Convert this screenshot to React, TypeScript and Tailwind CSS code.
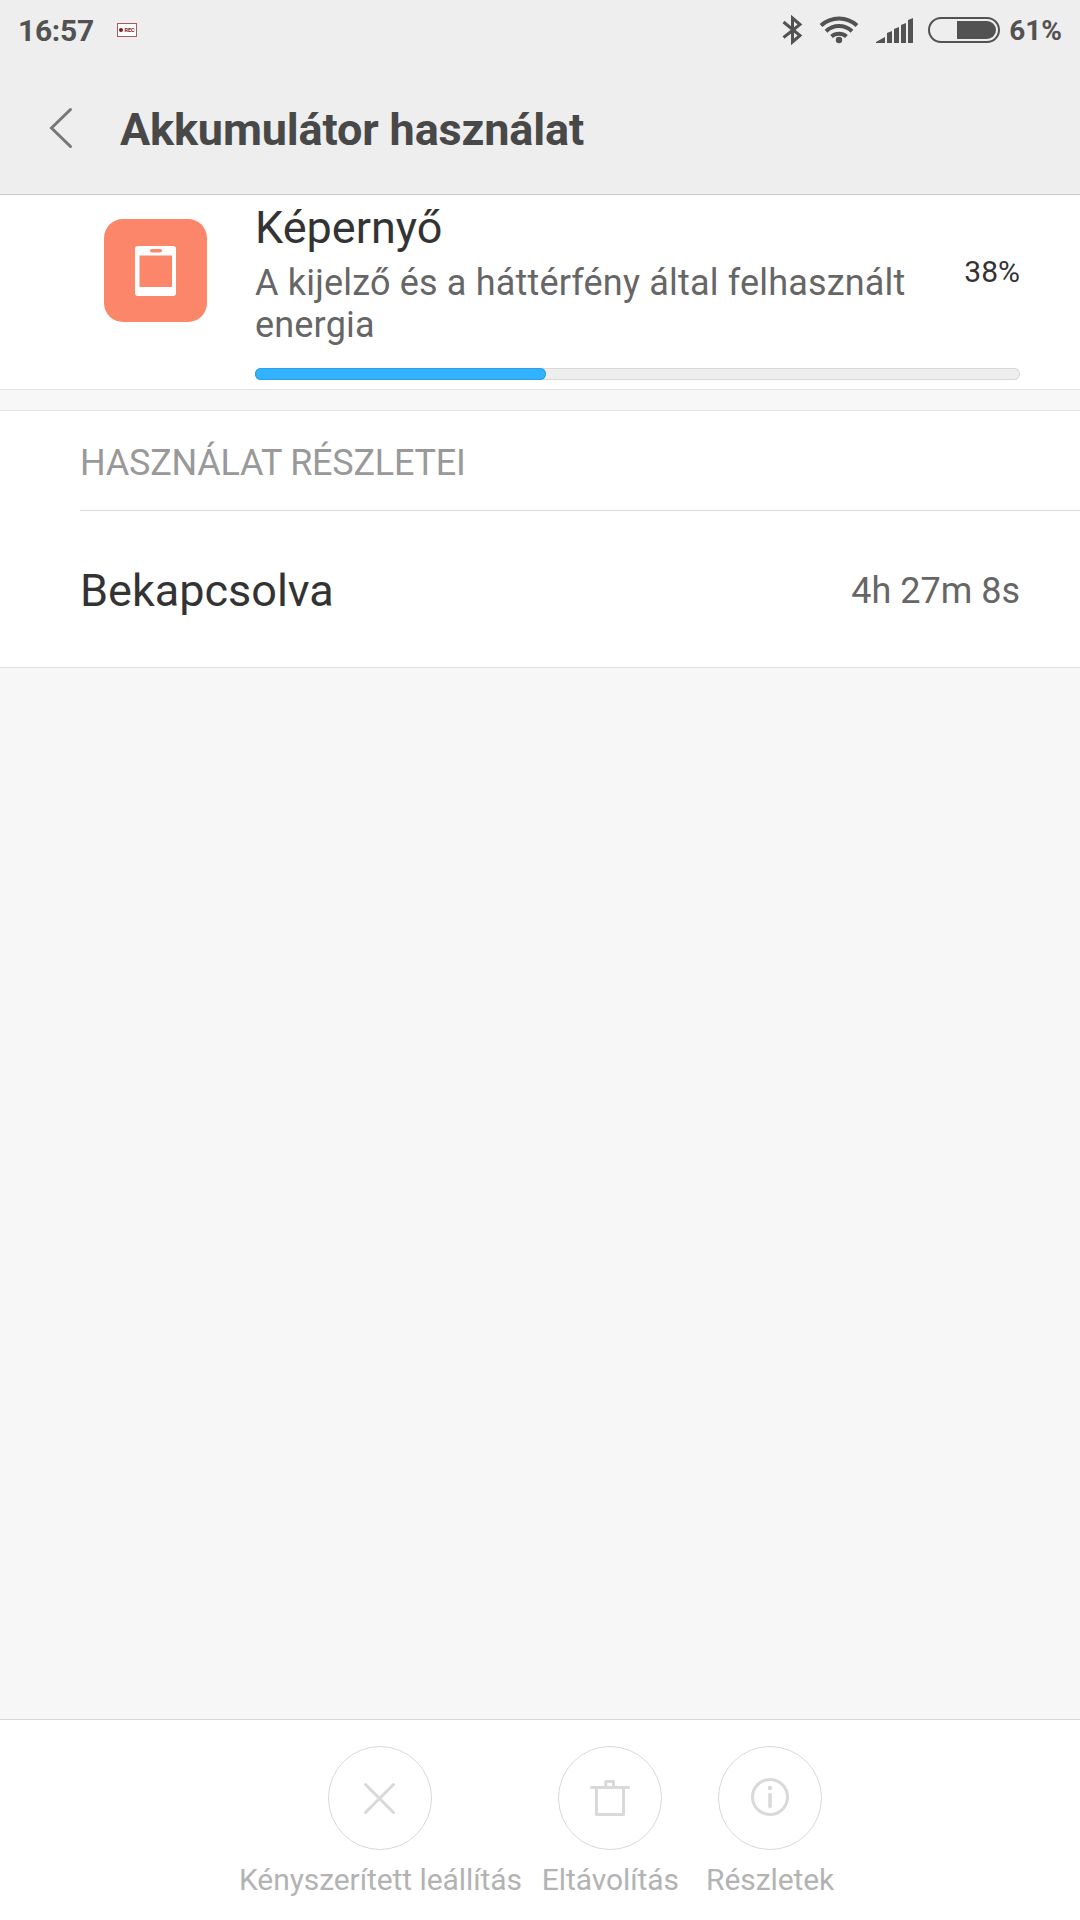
import type { ReactNode } from "react";

const usage = 38;

function StatusBar() {
	return (
		<div className="flex h-[60px] items-center justify-between pl-[18px] pr-[18px] text-[#525252]">
			<div className="flex items-center">
				<span className="w-[99px] text-[30px] leading-[60px] font-bold tracking-[-0.3px] pt-px">16:57</span>
				<svg className="h-[14px] w-5" viewBox="0 0 20 14" fill="none">
					<rect x="0.5" y="0.5" width="19" height="13" fill="#fff" stroke="#a85a5e" />
					<circle cx="4" cy="7" r="2" fill="#7d1a20" />
					<text x="7.5" y="9" fontSize="5.5" fontWeight="bold" textLength="10" fill="#7d1a20" fontFamily="Roboto">
						REC
					</text>
				</svg>
			</div>
			<div className="flex items-center">
				<svg className="h-[60px] w-[224px]" viewBox="0 0 224 60" fill="none">
					{/* bluetooth */}
					<path
						d="M1.5 22 18 35.5 10.5 42V18L18 24.5 1.5 37.5"
						stroke="#525252"
						strokeWidth="3"
					/>
					{/* wifi */}
					<path
						d="M39 25.5a26.5 26.5 0 0 1 36 0M44 31.2a19 19 0 0 1 26 0M49.5 36.5a11.5 11.5 0 0 1 15 0"
						stroke="#525252"
						strokeWidth="4"
					/>
					<circle cx="57" cy="40" r="3.2" fill="#525252" />
					{/* signal */}
					<path
						d="M94 43v-1l9-5v6zM105 43V33l5-2v12zM112 43V29l5-2v16zM119 43V25l5-2v20zM126 43V20l5-2v25z"
						fill="#525252"
					/>
					{/* battery */}
					<rect x="147" y="18" width="70" height="24" rx="12" stroke="#525252" strokeWidth="2" />
					<path d="M175 21h30a9 9 0 0 1 0 18h-30z" fill="#525252" />
				</svg>
				<span className="pt-px pl-[3px] text-[28px] leading-[60px] font-bold">61%</span>
			</div>
		</div>
	);
}

function Header() {
	return (
		<header className="h-[195px] border-b border-[#c8c8c8] bg-[#eeeeee]">
			<StatusBar />
			<div className="flex h-[138px] items-center pl-12">
				<svg className="mb-[2px] h-[42px] w-[26px]" viewBox="0 0 26 42" fill="none">
					<path d="M22.5 2.5 3.5 21l19 18.5" stroke="#777" strokeWidth="3" strokeLinecap="round" />
				</svg>
				<h1 className="pl-[46px] text-[45px] leading-[53px] font-bold tracking-[-0.15px] text-[#484848]">
					Akkumulátor használat
				</h1>
			</div>
		</header>
	);
}

function Action({ label, children }: { label: string; children: ReactNode }) {
	return (
		<button className="flex flex-col items-center">
			<svg className="h-[104px] w-[104px]" viewBox="0 0 104 104" fill="none" stroke="#d9d9d9">
				<circle cx="52" cy="52" r="51.5" />
				{children}
			</svg>
			<span className="mt-3 text-[30px] leading-[35px] tracking-[-0.08px] text-[#b3b3b3]">{label}</span>
		</button>
	);
}

export default function App() {
	return (
		<div className="flex h-[1920px] w-[1080px] flex-col bg-[#f7f7f7] font-['Roboto',sans-serif]">
			<Header />

			<section className="flex h-[195px] border-b border-[#e1e1e1] bg-white pr-[60px] pl-[104px]">
				<svg className="mt-6 h-[103px] w-[103px]" viewBox="0 0 103 103">
					<rect width="103" height="103" rx="19" fill="#fb8669" />
					<rect x="31" y="27" width="41" height="50" rx="3" fill="#fff" />
					<rect x="46" y="30" width="12" height="3.5" rx="1.7" fill="#fb8669" />
					<rect x="35.5" y="36.5" width="32.5" height="31.5" fill="#fb8669" />
				</svg>
				<div className="ml-12 flex-1 pt-[6px]">
					<div className="flex items-center justify-between">
						<div>
							<h2 className="text-[45px] leading-[53px] text-[#333]">Képernyő</h2>
							<p className="w-[670px] pt-2 text-[36px] leading-[42px] tracking-[0.18px] text-[#666]">
								A kijelző és a háttérfény által felhasznált energia
							</p>
						</div>
						<span className="pb-[3px] text-[30px] leading-9 text-[#333]">{usage}%</span>
					</div>
					<div className="mt-[22px] h-3 rounded-full bg-[#eeeeee] inset-ring inset-ring-[#d8d8d8]">
						<div
							className="h-3 rounded-full bg-[#33b2ff] inset-ring inset-ring-[#2f9fe3]"
							style={{ width: `${usage}%` }}
						/>
					</div>
				</div>
			</section>

			<section className="mt-5 h-[258px] border-y border-[#e1e1e1] bg-white pl-20">
				<h3 className="h-[100px] border-b border-[#d9d9d9] text-[36px] leading-[105px] tracking-[-0.24px] text-[#999]">
					HASZNÁLAT RÉSZLETEI
				</h3>
				<div className="flex h-[158px] items-center justify-between pt-[2px] pr-[60px]">
					<span className="text-[45px] text-[#333]">Bekapcsolva</span>
					<span className="text-[36px] text-[#666]">4h 27m 8s</span>
				</div>
			</section>

			<footer className="mt-auto flex h-[201px] border-t border-[#d8d8d8] bg-white pt-[26px] pl-[239px]">
				<Action label="Kényszerített leállítás">
					<path d="m37.5 38.5 28 28m0-28-28 28" strokeWidth="3" strokeLinecap="round" />
				</Action>
				<div className="mr-[27px] ml-5 flex">
					<Action label="Eltávolítás">
						<path
							d="M33.5 41.5h37M47.8 41v-5.5h7.7V41"
							strokeWidth="3"
							strokeLinecap="round"
							strokeLinejoin="round"
						/>
						<path d="M38.5 42v26.5h27V42" strokeWidth="3" strokeLinejoin="round" />
					</Action>
				</div>
				<Action label="Részletek">
					<circle cx="52" cy="51" r="17.5" strokeWidth="3" />
					<path d="M52 48.5v12" strokeWidth="3.5" strokeLinecap="round" />
					<circle cx="52" cy="42" r="2.2" fill="#d9d9d9" stroke="none" />
				</Action>
			</footer>
		</div>
	);
}
